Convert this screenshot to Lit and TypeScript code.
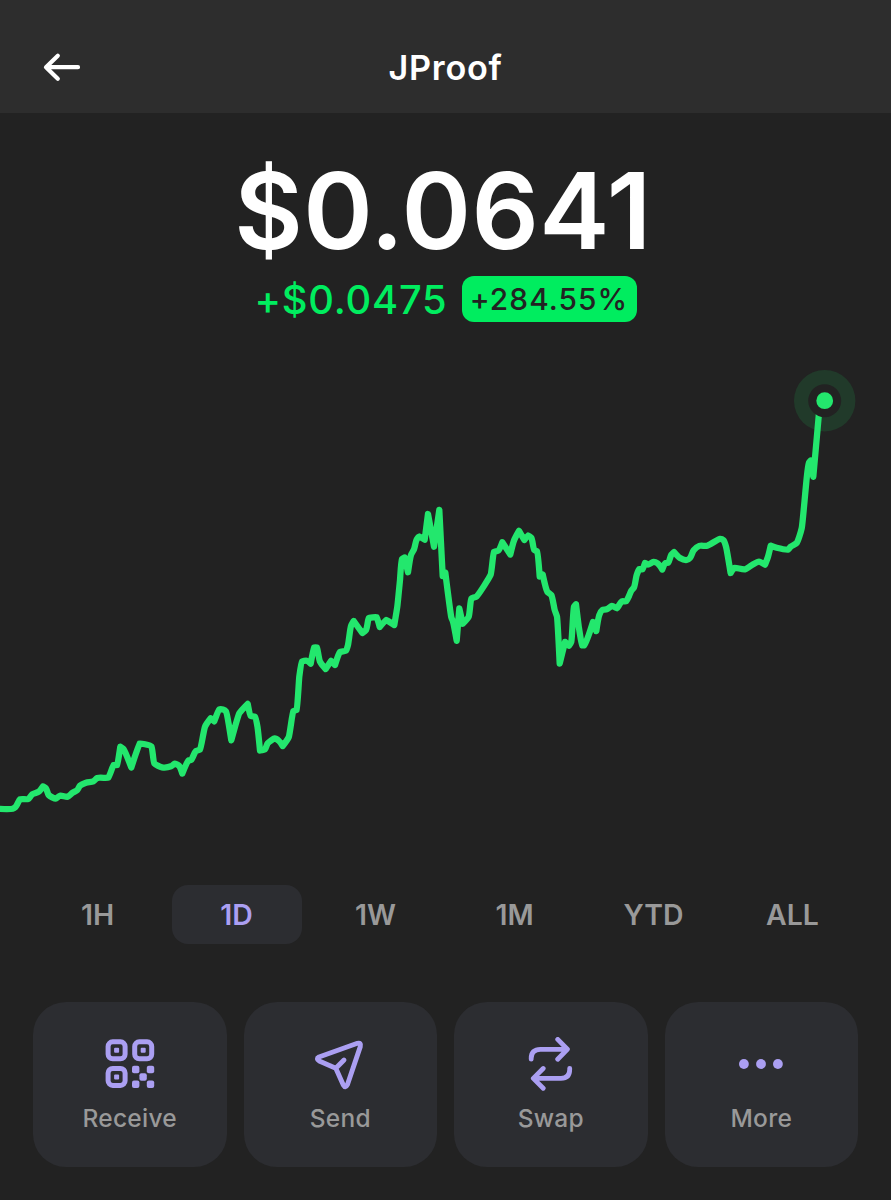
import { LitElement, html, css, svg } from "lit";
import { customElement, state } from "lit/decorators.js";

const PRICE_POINTS =
  "-4,808.7 12.7,808.7 15.5,807 20,799.3 28.3,799 32.3,794.3 39,791.5 43,786.3 46,788.5 48.7,795 55.7,798.7 60,795.7 67.7,796.7 72.7,792.7 77.3,790 80,785.7 86,782.7 93.3,781.3 97.3,778 108.3,777.7 113.7,765 117.3,765 120.3,746.7 123.5,749 131.3,767.5 139.5,743.5 145,744.3 151.5,746.5 154.3,763.3 162,767.3 171,766.3 174.7,763.7 179,765.7 182.3,773.5 188.5,760.5 191,760 196,751 200,749.7 205,726.7 210.7,718.3 214.3,721.3 219.3,709.5 223,709.5 226,711.5 231.3,740.3 239.3,713.3 247.7,703.9 250.7,716 255,716.7 257.5,727 260,750.5 265,749.3 267.7,743.3 274.7,738.5 279,741 282.7,746 288.8,737 293.3,711 296.7,710 299.3,676.7 302,661.5 306.7,660.7 310.7,663.7 314,647.5 317,647.5 320,661.7 325.7,669 331,660.9 335,665 340,652 346,650.7 348,645 351,626 353.7,621 362.3,633 366,630 368.7,618 376.7,617.2 379.7,627 386,620 394.3,625 397.3,606.7 400,580 402,559 404.7,557.5 408,572.3 411,555 414,549.3 416.7,539.5 419.3,536.5 424.7,539.7 428,514 434,546.7 439.3,509.9 442.7,576 445.3,572.5 451.3,617.3 453,621.7 456.7,640.8 459.3,608.5 462.7,623.7 468.7,616.7 471.3,598.7 476.7,596.3 490.7,574.7 493.9,551.9 498.3,550.7 502.3,542.3 510.3,554.5 514,540.5 519,530.9 524.3,540 528,535.3 531.3,537.8 534.3,550 537,551.3 539.7,576.5 542.7,574.5 547.3,591.7 551.3,595 554.7,610 557,616.7 559.7,663.6 565,641.9 569,645.7 571.3,641.7 574,606.7 576,604.3 579,628.3 582,645.3 584.3,645.3 588.7,635 593,622 596.3,631.1 599.3,615 602.3,610 606.7,609.3 612,606 617,608.3 622,601.3 626,601.3 629,596 631.3,590.7 634,587.3 636.7,575 639.3,569 642.5,569.3 645,563 648,564.6 653.5,561.9 657.5,563.3 662.3,569.5 665.3,563.3 668.3,562.7 671.3,554.8 674,552 680,558 686.7,560 690,558 693.7,550.3 699.3,545.9 707.3,545.7 720,538.9 723.5,540.3 726,546.7 730.6,573 734.3,567.9 745,569.3 751.7,565.2 759,561.7 765,564.7 768,556.7 770.7,545.6 776.7,547.7 788.3,549.5 790.7,546.7 796.7,543 801.7,528.3 804,506.7 806.5,480 809,462.5 810.7,460.5 813.3,476.8 818.9,414";

// Smooths gentle turns and leaves sharp reversals as corners.
function smoothPath(source: string): string {
  const pts = source.split(" ").map((p) => p.split(",").map(Number));
  const tangents = pts.map((p, i) => {
    if (i === 0 || i === pts.length - 1) return [0, 0];
    const [ax, ay] = [p[0] - pts[i - 1][0], p[1] - pts[i - 1][1]];
    const [bx, by] = [pts[i + 1][0] - p[0], pts[i + 1][1] - p[1]];
    const la = Math.hypot(ax, ay), lb = Math.hypot(bx, by);
    const cos = Math.max(0, (ax * bx + ay * by) / (la * lb));
    const [tx, ty] = [ax / la + bx / lb, ay / la + by / lb];
    const lt = Math.hypot(tx, ty) || 1;
    return [(tx / lt) * cos, (ty / lt) * cos];
  });
  let d = `M${pts[0][0]} ${pts[0][1]}`;
  for (let i = 1; i < pts.length; i++) {
    const [p, q] = [pts[i - 1], pts[i]];
    const k = Math.min(3, Math.hypot(q[0] - p[0], q[1] - p[1]) * 0.3);
    const [s, t] = [tangents[i - 1], tangents[i]];
    const c = [p[0] + s[0] * k, p[1] + s[1] * k, q[0] - t[0] * k, q[1] - t[1] * k, q[0], q[1]];
    d += `C${c.map((n) => n.toFixed(2)).join(" ")}`;
  }
  return d;
}

const PRICE_LINE = smoothPath(PRICE_POINTS);

const ICONS: Record<string, unknown> = {
  Receive: svg`
    <g fill="none" stroke="currentColor" stroke-width="5">
      <rect x="8.1" y="4.8" width="17" height="17" rx="4.6"/>
      <rect x="34.7" y="4.8" width="17" height="17" rx="4.6"/>
      <rect x="8.1" y="31.4" width="17" height="17" rx="4.6"/>
    </g>
    <g fill="currentColor">
      <rect x="14.1" y="10.8" width="5" height="5" rx="1"/>
      <rect x="40.7" y="10.8" width="5" height="5" rx="1"/>
      <rect x="14.1" y="37.4" width="5" height="5" rx="1"/>
      <rect x="32" y="28.8" width="7.4" height="7.4" rx="2"/>
      <rect x="46.8" y="28.8" width="7.4" height="7.4" rx="2"/>
      <rect x="39.4" y="36.3" width="7.4" height="7.4" rx="2"/>
      <rect x="32" y="43.6" width="7.4" height="7.4" rx="2"/>
      <rect x="46.8" y="43.6" width="7.4" height="7.4" rx="2"/>
    </g>`,
  Send: svg`
    <path d="M9 20 47.4 6.3Q51.4 5.4 50.3 9.6L37.4 47.8Q35.5 51.8 33.3 48L25.8 31.3 9.2 24Q5.6 21.8 9 20ZM25.8 31.3 34 23"
      fill="none" stroke="currentColor" stroke-width="4.9" stroke-linecap="round" stroke-linejoin="round"/>`,
  Swap: svg`
    <path d="M10.2 22.2V21.3Q10.2 12.3 19.4 12.3H46.2M36.7 2.4 46.4 12.3 36.7 22.2M48.7 31.3V32.6Q48.7 41.4 40 41.4H13M22.2 31.5 12.3 41.4 22.2 51.3"
      fill="none" stroke="currentColor" stroke-width="4.8" stroke-linecap="round" stroke-linejoin="round"/>`,
  More: svg`
    <g fill="currentColor">
      <circle cx="12.9" cy="27" r="4.9"/><circle cx="30" cy="27" r="4.9"/><circle cx="46.9" cy="27" r="4.9"/>
    </g>`,
};

@customElement("action-card")
class ActionCard extends LitElement {
  static properties = { label: {} };
  declare label: string;

  static styles = css`
    :host { display: block; }
    .card {
      box-sizing: border-box; width: 100%; height: 165px; padding: 35px 0 0;
      display: flex; flex-direction: column; align-items: center;
      border: 0; border-radius: 33px; background: #2c2d31; font-family: inherit;
    }
    .icon { display: block; flex: none; width: 60px; height: 58px; color: #ab9ff2; }
    .label { margin-top: 8px; color: #999; font-size: 24.5px; line-height: 30px; font-weight: 500; letter-spacing: 0.25px; }
  `;

  render() {
    return html`<button class="card">
      <svg class="icon" viewBox="0 0 60 58">${ICONS[this.label]}</svg>
      <span class="label">${this.label}</span>
    </button>`;
  }
}

@customElement("app-root")
class AppRoot extends LitElement {
  @state() private range = "1D";

  static styles = css`
    :host {
      display: flex; flex-direction: column; height: 1200px; overflow: hidden;
      background: #222; color: #fff; font-family: Inter, "Liberation Sans", sans-serif;
    }
    .header {
      flex: none; box-sizing: border-box; height: 113px; padding: 22px 32px 0;
      display: grid; grid-template-columns: 60px 1fr 60px; align-items: center; background: #2d2d2d;
    }
    .back { padding: 0; border: 0; background: none; color: #fff; height: 40px; }
    .back svg { display: block; width: 60px; height: 40px; }
    .title { margin: 0; text-align: center; font-size: 34.2px; line-height: 44px; font-weight: 600; letter-spacing: 0.7px; }
    .summary { flex: none; display: flex; flex-direction: column; align-items: center; height: 242px; }
    .price { margin-top: 34px; padding-right: 5px; font-size: 105.5px; line-height: 128px; font-weight: 600; letter-spacing: 0.4px; white-space: nowrap; }
    .change { display: flex; align-items: center; gap: 14px; margin-top: 1px; height: 46px; color: #00ed5f; }
    .amount { padding-top: 2px; font-size: 39.8px; font-weight: 500; line-height: 46px; letter-spacing: 0.8px; }
    .badge {
      box-sizing: border-box; width: 175px; height: 46px; border-radius: 12px; background: #00ed5f;
      color: #222; text-align: center; font-size: 29.8px; line-height: 46px; font-weight: 500; letter-spacing: 1.1px;
    }
    .chart { flex: none; display: block; width: 891px; height: 485px; }
    .ranges {
      flex: none; display: grid; grid-template-columns: repeat(6, 1fr); gap: 9px;
      margin-top: 45px; padding: 0 33px; height: 59px;
    }
    .range {
      padding: 0 1px 0 0; border: 0; border-radius: 16px; background: none; color: #999;
      font-family: inherit; font-size: 28.4px; font-weight: 600; line-height: 58px;
    }
    .selected { background: #2c2d31; color: #ab9ff2; }
    .actions {
      flex: none; display: grid; grid-template-columns: repeat(4, 1fr); gap: 17px;
      margin-top: 58px; padding: 0 33px;
    }
  `;

  render() {
    return html`
      <header class="header">
        <button class="back" aria-label="Back">
          <svg viewBox="0 0 60 40" fill="none" stroke="#fff" stroke-width="4.2" stroke-linecap="round" stroke-linejoin="round">
            <path d="M46 19.2H14.5M25.8 7.7 14 19.2 25.8 30.7"/>
          </svg>
        </button>
        <h1 class="title">JProof</h1>
      </header>
      <section class="summary">
        <div class="price">$0.0641</div>
        <div class="change">
          <span class="amount">+$0.0475</span>
          <span class="badge">+284.55%</span>
        </div>
      </section>
      <svg class="chart" viewBox="0 355 891 485">
        <circle cx="824.7" cy="400.7" r="30.7" fill="#213a2a"/>
        <path d=${PRICE_LINE} fill="none" stroke="#23e76d" stroke-width="6.3" stroke-linejoin="round"/>
        <circle cx="824.7" cy="400.7" r="16.5" fill="#222"/>
        <circle cx="824.7" cy="400.7" r="8.4" fill="#23e76d"/>
      </svg>
      <nav class="ranges">
        ${["1H", "1D", "1W", "1M", "YTD", "ALL"].map(
          (r) => html`<button class="range ${r === this.range ? "selected" : ""}" @click=${() => (this.range = r)}>${r}</button>`
        )}
      </nav>
      <section class="actions">
        ${["Receive", "Send", "Swap", "More"].map((l) => html`<action-card .label=${l}></action-card>`)}
      </section>
    `;
  }
}
